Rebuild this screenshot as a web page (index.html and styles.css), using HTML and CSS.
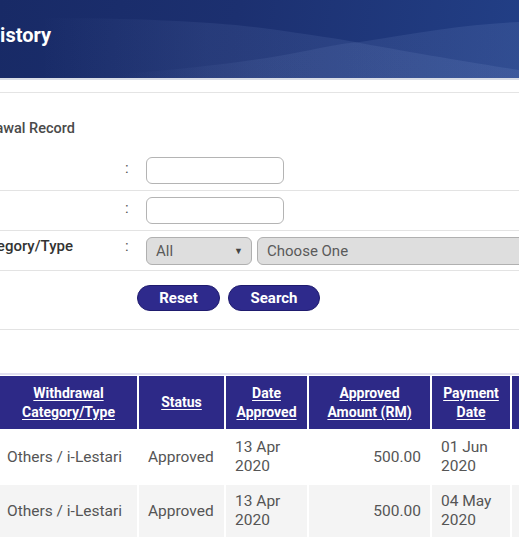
FILE: index.html
```html
<!DOCTYPE html>
<html>
<head>
<meta charset="utf-8">
<link rel="stylesheet" href="styles.css">
</head>
<body>
<div class="page">
  <header class="topbar">
    <svg class="waves" viewBox="0 0 519 78" preserveAspectRatio="none">
      <defs>
        <linearGradient id="fadeL" x1="0" y1="0" x2="1" y2="0">
          <stop offset="0" stop-color="#8ea6dc" stop-opacity="0"/>
          <stop offset="0.35" stop-color="#8ea6dc" stop-opacity="0.10"/>
          <stop offset="1" stop-color="#8ea6dc" stop-opacity="0.14"/>
        </linearGradient>
      </defs>
      <path d="M40 18 C 140 18, 220 22, 270 29 C 320 36, 345 40, 360 43 C 420 54, 480 64, 519 70 L519 78 L40 78 Z" fill="url(#fadeL)"/>
      <path d="M120 74 C 200 68, 260 60, 300 52 C 330 46, 345 43, 360 42 C 420 32, 470 24, 519 22 L519 78 L120 78 Z" fill="url(#fadeL)"/>
    </svg>
    <h1 class="title">History</h1>
  </header>

  <section class="card">
    <h2 class="card-title">Withdrawal Record</h2>
    <div class="form-row">
      <span class="label"></span>
      <span class="colon">:</span>
      <input class="field" type="text">
    </div>
    <div class="form-row">
      <span class="label"></span>
      <span class="colon">:</span>
      <input class="field" type="text">
    </div>
    <div class="form-row">
      <span class="label">Category/Type</span>
      <span class="colon">:</span>
      <div class="selects">
        <div class="select small"><span>All</span><span class="caret">▼</span></div>
        <div class="select wide"><span>Choose One</span></div>
      </div>
    </div>
    <div class="actions">
      <button class="btn reset">Reset</button>
      <button class="btn search">Search</button>
    </div>
  </section>

  <div class="table-wrap">
    <table class="grid">
      <colgroup>
        <col class="c1"><col class="c2"><col class="c3"><col class="c4"><col class="c5"><col class="c6">
      </colgroup>
      <thead>
        <tr>
          <th><u>Withdrawal<br>Category/Type</u></th>
          <th><u>Status</u></th>
          <th><u>Date<br>Approved</u></th>
          <th><u>Approved<br>Amount (RM)</u></th>
          <th><u>Payment<br>Date</u></th>
          <th></th>
        </tr>
      </thead>
      <tbody>
        <tr>
          <td class="first">Others / i-Lestari</td>
          <td>Approved</td>
          <td>13 Apr<br>2020</td>
          <td class="num">500.00</td>
          <td>01 Jun<br>2020</td>
          <td></td>
        </tr>
        <tr class="alt">
          <td class="first">Others / i-Lestari</td>
          <td>Approved</td>
          <td>13 Apr<br>2020</td>
          <td class="num">500.00</td>
          <td>04 May<br>2020</td>
          <td></td>
        </tr>
      </tbody>
    </table>
  </div>
</div>
</body>
</html>
```

FILE: styles.css
```css
* { box-sizing: border-box; }
html, body { margin: 0; padding: 0; }
body {
  width: 519px;
  height: 541px;
  overflow: hidden;
  background: #fff;
  font-family: Roboto, "Noto Sans", sans-serif;
  color: #555;
}
.page { width: 519px; }

.topbar {
  position: relative;
  height: 80px;
  background: linear-gradient(100deg, #182a66 0%, #1c3070 45%, #223f86 100%);
  border-bottom: 2px solid #d9dde6;
  overflow: hidden;
}
.waves {
  position: absolute;
  left: 0; top: 0;
  width: 519px; height: 78px;
}
.title {
  position: relative;
  margin: 0;
  padding-top: 22px;
  margin-left: -14px;
  font-size: 20px;
  font-weight: 700;
  color: #fff;
  line-height: 26px;
}

.card {
  margin-top: 12px;
  border-top: 1px solid #e4e4e4;
}
.card-title {
  margin: 0;
  padding-top: 26px;
  padding-bottom: 12px;
  text-indent: -47px;
  font-size: 14.5px;
  font-weight: 500;
  color: #4a4a4a;
  line-height: 20px;
}
.form-row {
  display: grid;
  grid-template-columns: 120px 26px 1fr;
  align-items: center;
  height: 40px;
  border-bottom: 1px solid #e3e3e3;
}
.label {
  text-indent: -26px;
  font-size: 15px;
  font-weight: 500;
  color: #333;
  white-space: nowrap;
  margin-top: -10px;
}
.colon {
  padding-left: 5px;
  font-size: 15px;
  color: #555;
  margin-top: -6px;
}
.form-row:nth-of-type(3) .colon { margin-top: -10px; }
.field {
  width: 138px;
  height: 27px;
  border: 1px solid #b4b4b4;
  border-radius: 6px;
  background: #fff;
  margin: 0;
}
.selects {
  display: flex;
  gap: 5px;
  white-space: nowrap;
}
.select {
  height: 28px;
  border: 1px solid #b0b0b0;
  border-radius: 6px;
  background: #dedede;
  display: flex;
  align-items: center;
  justify-content: space-between;
  padding: 0 8px 0 9px;
  font-size: 15px;
  color: #5a5a5a;
  flex-shrink: 0;
}
.select.small { width: 106px; }
.select.wide { width: 300px; }
.caret { font-size: 9px; color: #444; }

.actions {
  display: flex;
  gap: 8px;
  padding: 14px 0 18px 137px;
  border-bottom: 1px solid #e3e3e3;
}
.btn {
  height: 26px;
  border: 1px solid #1f1b6e;
  border-radius: 13px;
  background: #2e2a8c;
  color: #fff;
  font-family: Roboto, sans-serif;
  font-weight: 700;
  font-size: 15px;
  padding: 0;
}
.btn.reset { width: 83px; }
.btn.search { width: 92px; }

.table-wrap {
  margin-top: 43px;
  border-top: 2px solid #e2e0f0;
}
.grid {
  table-layout: fixed;
  border-collapse: separate;
  border-spacing: 2px;
  margin-left: -2px;
  margin-top: -1px;
  width: 636px;
}
.c1 { width: 137px; }
.c2 { width: 85px; }
.c3 { width: 81px; }
.c4 { width: 121px; }
.c5 { width: 78px; }
.c6 { width: 120px; }
.grid th {
  height: 53px;
  background: #2d2987;
  color: #fff;
  font-size: 14px;
  font-weight: 700;
  line-height: 19px;
  text-align: center;
  padding: 0 2px;
}
.grid th u { text-underline-offset: 2px; }
.grid td {
  height: 52px;
  font-size: 15.5px;
  line-height: 19px;
  color: #555;
  padding: 0 9px;
  white-space: nowrap;
  background: #fff;
}
.grid tr.alt td { background: #f4f4f4; }
.grid td.first { padding-left: 7px; }
.grid td.num { text-align: right; }
```
